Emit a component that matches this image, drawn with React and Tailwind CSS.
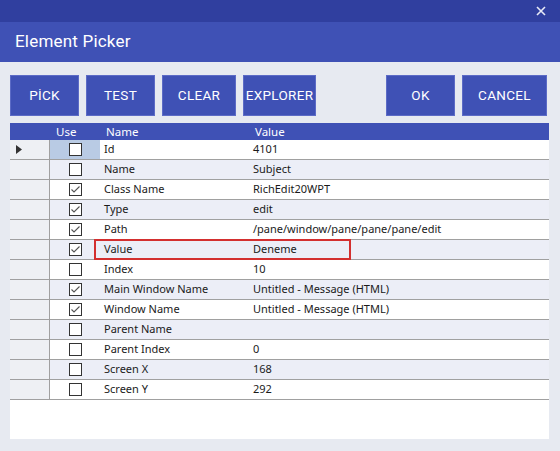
import React from 'react';

const ROWS = [
    { name: 'Id', value: '4101', use: false },
    { name: 'Name', value: 'Subject', use: false },
    { name: 'Class Name', value: 'RichEdit20WPT', use: true },
    { name: 'Type', value: 'edit', use: true },
    { name: 'Path', value: '/pane/window/pane/pane/pane/edit', use: true },
    { name: 'Value', value: 'Deneme', use: true, marked: true },
    { name: 'Index', value: '10', use: false },
    { name: 'Main Window Name', value: 'Untitled - Message (HTML)', use: true },
    { name: 'Window Name', value: 'Untitled - Message (HTML)', use: true },
    { name: 'Parent Name', value: '', use: false },
    { name: 'Parent Index', value: '0', use: false },
    { name: 'Screen X', value: '168', use: false },
    { name: 'Screen Y', value: '292', use: false },
];

const Btn = ({ label, w }) => (
    <button className={`${w} h-[41px] bg-[#3f51b5] border border-[#5c6bc6] text-white text-[13.5px] font-normal tracking-[0.3px] flex items-center justify-center`}>
        {label}
    </button>
);

const Check = ({ checked }) => (
    <div className="w-[13px] h-[13px] border border-[#333] bg-white flex items-center justify-center">
        {checked && (
            <svg width="11" height="11" viewBox="0 0 11 11">
                <path d="M1.5 5.5 L4 8 L9.5 2.5" fill="none" stroke="#555" strokeWidth="1.1" />
            </svg>
        )}
    </div>
);

export default function App() {
    return (
        <div className="w-[560px] h-[451px] bg-[#e7eaf1] flex flex-col overflow-hidden" style={{ fontFamily: 'Roboto, sans-serif' }}>
            {/* title strip */}
            <div className="h-[22px] bg-[#303f9f] flex items-center justify-end pr-[14px]">
                <svg width="10" height="10" viewBox="0 0 10 10">
                    <path d="M1 1 L9 9 M9 1 L1 9" stroke="#e8eaf6" strokeWidth="1.6" />
                </svg>
            </div>
            {/* header */}
            <div className="h-[40px] bg-[#3f51b5] flex items-center px-[15px] text-white text-[17px] font-normal tracking-[0.2px]">
                Element Picker
            </div>

            {/* buttons */}
            <div className="mt-[13px] pl-[10px] pr-[13px] flex gap-[7px]">
                <Btn label="PİCK" w="w-[69px]" />
                <Btn label="TEST" w="w-[69px]" />
                <Btn label="CLEAR" w="w-[74px]" />
                <Btn label="EXPLORER" w="w-[73px]" />
                <div className="flex-1" />
                <Btn label="OK" w="w-[69px]" />
                <Btn label="CANCEL" w="w-[85px]" />
            </div>

            {/* grid */}
            <div className="mt-[7px] ml-[10px] w-[539px] h-[316px] bg-white text-[11px] text-[#1a1a1a]" style={{ fontFamily: '"Noto Sans", sans-serif' }}>
                <div className="h-[17px] bg-[#3f51b5] text-white text-[11.5px] flex items-center">
                    <div className="w-[40px]" />
                    <div className="w-[50px] pl-[6px]">Use</div>
                    <div className="w-[150px] pl-[6px]">Name</div>
                    <div className="flex-1 pl-[5px]">Value</div>
                </div>
                {ROWS.map((r, i) => (
                    <div key={r.name} className={`h-[20px] flex border-b border-[#a0a0a0] ${i % 2 ? 'bg-[#eceef7]' : 'bg-white'}`}>
                        <div className="w-[40px] bg-[#eef0f4] border-r border-[#a0a0a0] flex items-center pl-[6px]">
                            {i === 0 && (
                                <svg width="6" height="9" viewBox="0 0 6 9">
                                    <path d="M0 0 L6 4.5 L0 9 Z" fill="#333" />
                                </svg>
                            )}
                        </div>
                        <div className={`w-[50px] flex items-center pl-[19px] ${i === 0 ? 'bg-[#b9cbe4]' : ''}`}>
                            <Check checked={r.use} />
                        </div>
                        <div className="flex-1 flex items-center relative">
                            <div className="w-[150px] pl-[4px]">{r.name}</div>
                            <div className="flex-1 pl-[3px]">{r.value}</div>
                            {r.marked && (
                                <div className="absolute left-[-6px] top-[-1px] w-[257px] h-[21px] border-2 border-[#d32f2f]" />
                            )}
                        </div>
                    </div>
                ))}
            </div>
        </div>
    );
}
